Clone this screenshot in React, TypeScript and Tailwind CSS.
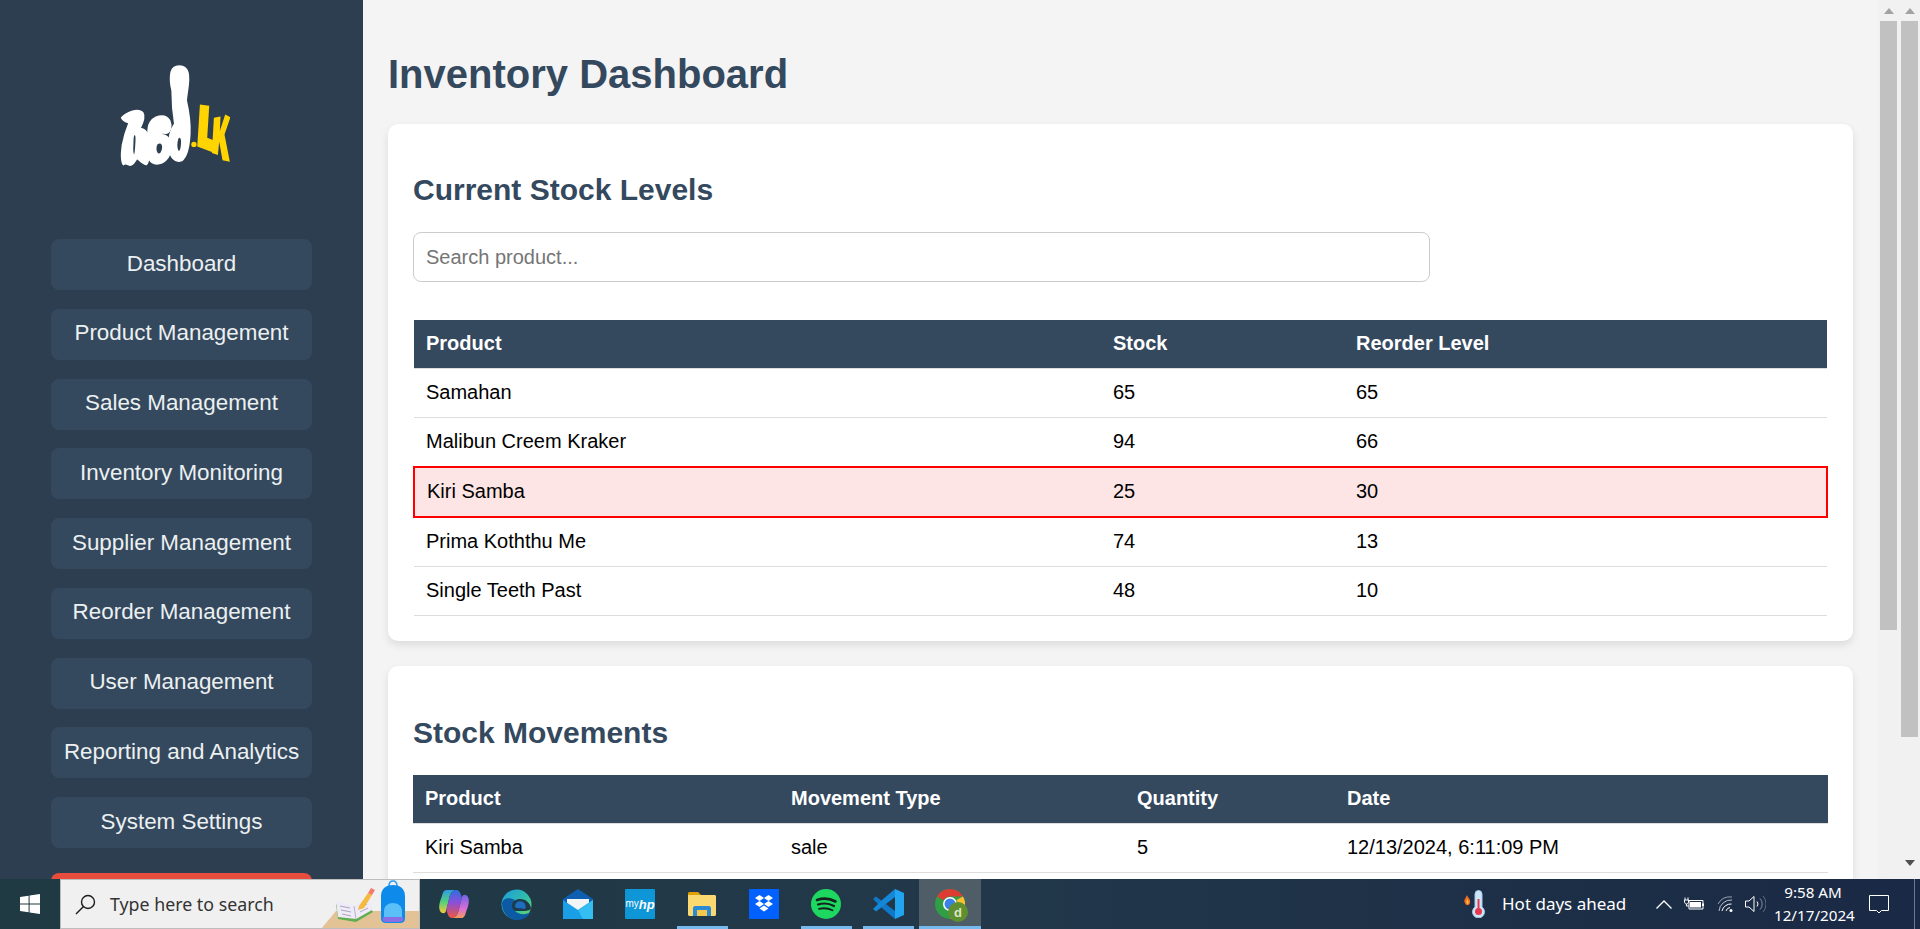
import type { ReactNode } from "react";

const NAV_ITEMS = [
  "Dashboard",
  "Product Management",
  "Sales Management",
  "Inventory Monitoring",
  "Supplier Management",
  "Reorder Management",
  "User Management",
  "Reporting and Analytics",
  "System Settings",
];

const STOCK_ROWS = [
  { name: "Samahan", stock: 65, reorder: 65 },
  { name: "Malibun Creem Kraker", stock: 94, reorder: 66 },
  { name: "Kiri Samba", stock: 25, reorder: 30 },
  { name: "Prima Koththu Me", stock: 74, reorder: 13 },
  { name: "Single Teeth Past", stock: 48, reorder: 10 },
];

const TH = "px-3 pt-[13px] pb-[15px] text-left text-[20px] leading-[20px] font-bold text-white border-b border-[#ddd]";
const TD = "px-3 pt-[13px] pb-[15px] text-left text-[20px] leading-[20px] text-black border-b border-[#ddd]";

function Logo() {
  return (
    <svg width="110" height="103" viewBox="360 190 330 310">
      <g fill="#fff" stroke="#fff" strokeWidth="6" strokeLinejoin="round">
        <path d="M365 352C380 335 415 322 428 338C436 352 424 372 418 385C435 385 447 400 447 430C447 460 447 485 438 492C427 490 420 480 410 472C405 482 400 492 390 494C380 494 378 484 370 492C362 480 364 440 372 415C376 395 383 380 388 366C378 364 370 362 365 352Z" />
        <path d="M447 375C458 345 495 338 508 360C516 378 510 398 496 398C484 396 476 398 474 406C494 398 514 412 512 442C510 472 492 490 470 490C450 490 440 470 444 440C447 420 441 398 447 375Z" />
        <path d="M514 215C520 192 555 190 563 215C570 240 560 270 558 300C565 330 571 360 569 400C567 440 559 470 545 480C525 488 510 470 508 440C506 410 514 385 525 370C520 340 517 300 517 270C512 250 510 235 514 215Z" />
      </g>
      <g fill="#2c3e50">
        <path d="M402 405C405 403 407 407 406 422C405 445 404 458 402 462C399 458 399 445 400 427C400 415 401 408 402 405Z" />
        <path d="M472 432C480 426 488 430 486 444C484 456 478 462 473 458C468 450 468 440 472 432Z" />
        <path d="M535 415C540 408 544 414 543 430C542 446 539 454 535 450C531 442 531 428 535 415Z" />
      </g>
      <circle cx="582" cy="432" r="8" fill="#ffd400" />
      <g fill="#ffd400">
        <path d="M600 312L628 316L622 412L652 424L650 460L592 438Z" />
        <path d="M642 352L662 348L660 392L676 342L692 350L674 402L690 484L668 480L658 424L654 464L636 458Z" />
      </g>
    </svg>
  );
}

function Sidebar() {
  return (
    <aside className="w-[363px] shrink-0 overflow-hidden bg-[#2c3e50] px-[51px]">
      <div className="h-[239px] pt-[64px] pl-[69px]">
        <Logo />
      </div>
      <nav className="flex flex-col gap-[18.75px]">
        {NAV_ITEMS.map((item) => (
          <a
            key={item}
            className="flex h-[51px] items-center justify-center rounded-lg bg-[#34495e] pb-[2px] text-[22.4px] text-[#ecf0f1]"
          >
            {item}
          </a>
        ))}
        <div className="mt-[6px] h-[51px] rounded-lg bg-[#e74c3c]" />
      </nav>
    </aside>
  );
}

function Card({ className, children }: { className: string; children: ReactNode }) {
  return (
    <section className={`rounded-[10px] bg-white px-[25px] pb-[25px] shadow-[0_4px_8px_rgba(0,0,0,0.1)] ${className}`}>
      {children}
    </section>
  );
}

function MainContent() {
  return (
    <main className="flex-1 overflow-hidden bg-[#f4f4f4] pl-[25px] pr-[25px] pt-[50px]">
      <h1 className="mb-[26px] text-[40px] leading-[48px] font-bold text-[#34495e]">Inventory Dashboard</h1>

      <Card className="pt-[49px]">
        <h2 className="mb-[25px] text-[30px] leading-[34px] font-bold text-[#34495e]">Current Stock Levels</h2>
        <input
          placeholder="Search product..."
          className="mb-[38px] block h-[50px] w-[1017px] rounded-lg border border-[#ccc] px-[12px] text-[20px] placeholder:text-[#757575]"
        />
        <table className="w-full table-fixed border-collapse">
          <colgroup>
            <col className="w-[687px]" />
            <col className="w-[243px]" />
            <col />
          </colgroup>
          <thead>
            <tr className="bg-[#34495e]">
              <th className={TH}>Product</th>
              <th className={TH}>Stock</th>
              <th className={TH}>Reorder Level</th>
            </tr>
          </thead>
          <tbody>
            {STOCK_ROWS.map((row) => (
              <tr key={row.name} className={row.stock < row.reorder ? "border-2 border-[#ff0000] bg-[#fde5e5]" : ""}>
                <td className={TD}>{row.name}</td>
                <td className={TD}>{row.stock}</td>
                <td className={TD}>{row.reorder}</td>
              </tr>
            ))}
          </tbody>
        </table>
      </Card>

      <Card className="mt-[25px] pt-[50px]">
        <h2 className="mb-[25px] text-[30px] leading-[34px] font-bold text-[#34495e]">Stock Movements</h2>
        <table className="w-full table-fixed border-collapse">
          <colgroup>
            <col className="w-[366px]" />
            <col className="w-[346px]" />
            <col className="w-[210px]" />
            <col />
          </colgroup>
          <thead>
            <tr className="bg-[#34495e]">
              <th className={TH}>Product</th>
              <th className={TH}>Movement Type</th>
              <th className={TH}>Quantity</th>
              <th className={TH}>Date</th>
            </tr>
          </thead>
          <tbody>
            <tr>
              <td className={TD}>Kiri Samba</td>
              <td className={TD}>sale</td>
              <td className={TD}>5</td>
              <td className={TD}>12/13/2024, 6:11:09 PM</td>
            </tr>
          </tbody>
        </table>
      </Card>
    </main>
  );
}

function ScrollBar({ thumb, withDown }: { thumb: string; withDown?: boolean }) {
  return (
    <div className="flex w-[21px] shrink-0 flex-col bg-[#f1f1f1] px-[2px]">
      <div className="flex h-[21px] items-center justify-center">
        <svg width="10" height="6" viewBox="0 0 10 6">
          <path d="M5 0L10 6H0Z" fill="#a3a3a3" />
        </svg>
      </div>
      <div className={`${thumb} shrink-0 bg-[#c1c1c1]`} />
      {withDown && (
        <div className="mt-auto flex h-[21px] items-start justify-center pt-[2px]">
          <svg width="10" height="6" viewBox="0 0 10 6">
            <path d="M0 0H10L5 6Z" fill="#505050" />
          </svg>
        </div>
      )}
    </div>
  );
}

function WindowsLogo() {
  return (
    <svg width="20" height="20" viewBox="0 0 20 20" fill="#fff">
      <path d="M0 3L8.6 1.7V9.5H0Z" />
      <path d="M9.6 1.5L20 0V9.5H9.6Z" />
      <path d="M0 10.5H8.6V18.3L0 17Z" />
      <path d="M9.6 10.5H20V20L9.6 18.5Z" />
    </svg>
  );
}

function SearchDecor() {
  return (
    <svg width="98" height="48" viewBox="0 1 98 48" className="shrink-0">
      <path d="M15 32H98V50H0Z" fill="#e3c396" />
      <path d="M15 25L17 40L35 43L52 33L50 30L35 40Z" fill="#5fae4f" />
      <path d="M15 22L33 27L49 18L51 31L35 40L17 38Z" fill="#efeaf8" />
      <path d="M33 27L35 40" stroke="#b9b3cc" strokeWidth="1" />
      <path d="M19 27L29 29M20 31L30 33M21 35L30 37M38 29L46 25M39 33L47 29" stroke="#aaa7bd" strokeWidth="1" />
      <path d="M38 27L47 14L51 16L43 29L37 31Z" fill="#f4b93d" />
      <path d="M47 14L50 9L54 11L51 16Z" fill="#ef7c6d" />
      <path d="M68 7C68 3 70 2 72 2C74 2 76 3 76 7" fill="none" stroke="#2a9cf0" strokeWidth="1.500" />
      <path d="M60 17C60 9 66 6 72 6C78 6 84 9 84 17V39C84 43 82 44 78 44H66C62 44 60 43 60 39Z" fill="#0e8bea" />
      <path d="M63 32C63 27 67 24 72 24C77 24 81 27 81 32V38H63Z" fill="#5cc0f8" />
      <path d="M62 38H82V41C82 42 80 43 78 43H66C64 43 62 42 62 41Z" fill="#8a6ee6" />
    </svg>
  );
}

function Copilot() {
  return (
    <svg width="30" height="30" viewBox="0 0 30 30">
      <defs>
        <linearGradient id="cpA" x1="0.3" y1="0" x2="0.3" y2="1">
          <stop offset="0" stopColor="#2f9be8" />
          <stop offset="0.5" stopColor="#4fd07a" />
          <stop offset="1" stopColor="#f8c93a" />
        </linearGradient>
        <linearGradient id="cpB" x1="0.5" y1="0" x2="0.5" y2="1">
          <stop offset="0" stopColor="#6f63ea" />
          <stop offset="0.6" stopColor="#d96ed6" />
          <stop offset="1" stopColor="#f59a5a" />
        </linearGradient>
        <linearGradient id="cpC" x1="0.5" y1="0" x2="0.5" y2="1">
          <stop offset="0" stopColor="#2f6fe4" />
          <stop offset="0.45" stopColor="#8a4fd8" />
          <stop offset="1" stopColor="#f1573f" />
        </linearGradient>
      </defs>
      <path d="M8 1H17C12 2 11 6 10 10L7 22C6 25 3 25 1 22C-1 18 1 12 3 7C4 3 5 1 8 1Z" fill="url(#cpA)" />
      <path d="M22 29H13C18 28 19 24 20 20L23 8C24 5 27 5 29 8C31 12 29 18 27 23C26 27 25 29 22 29Z" fill="url(#cpB)" />
      <path d="M10 10C11 6 13 2 17 1C20 1 21 3 22 6L23 9L20 20C19 24 18 28 13 29C10 29 9 26 8 23L7.500 20Z" fill="url(#cpC)" />
    </svg>
  );
}

function Edge() {
  return (
    <svg width="31" height="31" viewBox="0 0 31 31">
      <defs>
        <linearGradient id="edA" x1="0" y1="0" x2="1" y2="1">
          <stop offset="0" stopColor="#1b9de2" />
          <stop offset="0.6" stopColor="#35c1a0" />
          <stop offset="1" stopColor="#7edb55" />
        </linearGradient>
      </defs>
      <circle cx="15.500" cy="15.500" r="15" fill="url(#edA)" />
      <path d="M1 14C1 25 9 31 16 31C22 31 27 28 30 23C25 26 18 26 14 22C11 19 11 14 14 11C8 8 2 9 1 14Z" fill="#0c59a4" />
      <path d="M11 17C11 12 15 10 19 10C25 10 29 14 30 19C30 21 27 22 22 22H15C13 22 11 20 11 17Z" fill="#1f3a4a" />
      <path d="M14 18C14 13 18 11 22 13C25 15 25 19 24 20C20 19 16 20 14 18Z" fill="#1c6fc0" />
    </svg>
  );
}

function Mail() {
  return (
    <svg width="30" height="30" viewBox="0 0 30 30">
      <path d="M0 10L15 0L30 10V30H0Z" fill="#0f5fb0" />
      <path d="M4 10H26V20L15 25L4 20Z" fill="#f2f4f6" />
      <path d="M0 11L15 21L30 11V30H0Z" fill="#1a9fe6" />
      <path d="M15 21L30 11V30H20Z" fill="#34bdf0" />
    </svg>
  );
}

function MyHp() {
  return (
    <div className="flex h-[30px] w-[30px] items-center justify-center rounded-[1px] bg-[#0f96d6] text-white">
      <span className="text-[10px] leading-none">my</span>
      <span className="text-[13px] leading-none font-bold italic">hp</span>
    </div>
  );
}

function Explorer() {
  return (
    <svg width="28" height="24" viewBox="0 0 28 24">
      <path d="M0 1.500C0 .6 .6 0 1.500 0H10L13 3H0Z" fill="#e0a100" />
      <path d="M0 3H26.500C27.400 3 28 3.600 28 4.500V22.500C28 23.400 27.400 24 26.500 24H1.500C.6 24 0 23.400 0 22.500Z" fill="#fbd971" />
      <path d="M5 24V16C5 15 6 14 7 14H21C22 14 23 15 23 16V24H19V18H9V24Z" fill="#2a8ad4" />
      <path d="M9 18H19V24H9Z" fill="#f5c84b" />
    </svg>
  );
}

function Dropbox() {
  return (
    <svg width="30" height="30" viewBox="0 0 30 30">
      <rect width="30" height="30" fill="#0061fe" />
      <g fill="#fff">
        <path d="M10.500 6L15 9L10.500 12L6 9Z" />
        <path d="M19.500 6L24 9L19.500 12L15 9Z" />
        <path d="M10.500 12L15 15L10.500 18L6 15Z" />
        <path d="M19.500 12L24 15L19.500 18L15 15Z" />
        <path d="M15 16.500L19.500 19.500L15 22.500L10.500 19.500Z" />
      </g>
    </svg>
  );
}

function Spotify() {
  return (
    <svg width="30" height="30" viewBox="0 0 30 30">
      <circle cx="15" cy="15" r="15" fill="#1ed760" />
      <g fill="none" stroke="#14241c" strokeLinecap="round">
        <path d="M6 11C12 9 19 9.500 24.500 12.500" strokeWidth="2.600" />
        <path d="M7 15.500C12 14 18.500 14.500 23 17" strokeWidth="2.200" />
        <path d="M8 19.800C12.500 18.800 17.500 19.200 21.500 21.300" strokeWidth="1.800" />
      </g>
    </svg>
  );
}

function VsCode() {
  return (
    <svg width="31" height="30" viewBox="0 0 31 30">
      <path d="M0 10L3 7.500L22 22V30L9 19Z" fill="#0f78c8" />
      <path d="M0 20L3 22.500L22 8V0L9 11Z" fill="#1587d8" />
      <path d="M22 0L31 4V26L22 30Z" fill="#22a5f1" />
    </svg>
  );
}

function Chrome() {
  return (
    <div className="relative h-[30px] w-[30px]">
      <svg width="30" height="30" viewBox="0 0 30 30">
        <circle cx="15" cy="15" r="15" fill="#2f9e44" />
        <path d="M15 0A15 15 0 0 1 28 7.500H15A7.500 7.500 0 0 0 8.500 11.300L2 7.500A15 15 0 0 1 15 0Z" fill="#dc3c31" />
        <path d="M28 7.500A15 15 0 0 1 15 30L21.500 19A7.500 7.500 0 0 0 21.500 11Z" fill="#fbc02d" />
        <circle cx="15" cy="15" r="7" fill="#fff" />
        <circle cx="15" cy="15" r="5.500" fill="#3b82e6" />
      </svg>
      <span className="absolute left-[13px] top-[13px] flex h-[20px] w-[20px] items-center justify-center rounded-full bg-[#5f8f2f] text-[13px] leading-none font-bold text-[#dbe6c4]">
        d
      </span>
    </div>
  );
}

const TASK_APPS: { key: string; icon: ReactNode; running?: boolean; active?: boolean }[] = [
  { key: "copilot", icon: <Copilot /> },
  { key: "edge", icon: <Edge /> },
  { key: "mail", icon: <Mail /> },
  { key: "myhp", icon: <MyHp /> },
  { key: "explorer", icon: <Explorer />, running: true },
  { key: "dropbox", icon: <Dropbox /> },
  { key: "spotify", icon: <Spotify />, running: true },
  { key: "vscode", icon: <VsCode />, running: true },
  { key: "chrome", icon: <Chrome />, active: true },
];

function Thermometer() {
  return (
    <svg width="24" height="28" viewBox="0 0 24 28">
      <path d="M2 13C0 10 3 8 4 5C5 8 8 9 7 13C6 16 3 16 2 13Z" fill="#f26b21" />
      <path d="M3.500 13C3 11 4 10 4.500 9C5 11 6 11 5.500 13C5 14.500 4 14.500 3.500 13Z" fill="#fbbf3f" />
      <path d="M12 4A3.500 3.500 0 0 1 19 4V17A6 6 0 1 1 12 17Z" fill="#cfe6f7" stroke="#9fcbed" strokeWidth="1" />
      <rect x="14.500" y="9" width="2" height="10" fill="#e63950" />
      <circle cx="15.500" cy="21.500" r="3.500" fill="#e63950" />
    </svg>
  );
}

function Tray() {
  return (
    <div className="ml-auto flex h-full items-center text-white">
      <Thermometer />
      <span className="ml-[15px] w-[122px] font-['Noto_Sans',sans-serif] text-[17px] whitespace-nowrap">Hot days ahead</span>
      <svg width="16" height="9" viewBox="0 0 16 9" className="ml-[32px]" fill="none" stroke="#fff" strokeWidth="1.300">
        <path d="M.5 8.500L8 1L15.500 8.500" />
      </svg>
      <svg width="20" height="14" viewBox="0 0 20 14" className="ml-[12px]" fill="none" stroke="#fff">
        <path d="M5 3.500H19V12H5Z" strokeWidth="1" />
        <path d="M6 5H17V10.500H6Z" fill="#fff" stroke="none" />
        <path d="M18 6.500H20V9H18Z" fill="#fff" stroke="none" />
        <path d="M1 .5V3M4 .5V3M.5 3H4.500V5C4.500 6 3.500 7 2.500 7C1.500 7 .5 6 .5 5ZM2.500 7V9H5" strokeWidth="1" />
      </svg>
      <svg width="16" height="16" viewBox="0 0 16 16" className="ml-[13px]" fill="none" stroke="#fff">
        <path d="M1 8A14 14 0 0 1 15 1" strokeWidth="1" opacity="0.55" />
        <path d="M2 15A12 12 0 0 1 15 4" strokeWidth="1" opacity="0.7" />
        <path d="M5 15A9 9 0 0 1 14.500 8" strokeWidth="1" />
        <path d="M9 15A5 5 0 0 1 13 11.500" strokeWidth="1" />
        <circle cx="14" cy="14.500" r="1.500" fill="#fff" stroke="none" />
      </svg>
      <svg width="21" height="18" viewBox="0 0 21 18" className="ml-[12px]" fill="none" stroke="#fff" strokeWidth="1">
        <path d="M.5 6H4L9 1.500V16.500L4 12H.5Z" />
        <path d="M12 6.500A4 4 0 0 1 12 11.500" />
        <path d="M15 3.500A8 8 0 0 1 15 14.500" opacity="0.45" />
        <path d="M18 1A12 12 0 0 1 18 17" opacity="0.3" />
      </svg>
      <div className="ml-[8px] w-[78px] text-center font-['Noto_Sans',sans-serif] text-[15.200px] leading-[23px]">
        <div>9:58 AM</div>
        <div className="whitespace-nowrap">12/17/2024</div>
      </div>
      <svg width="20" height="19" viewBox="0 0 20 19" className="ml-[17px]" fill="none" stroke="#fff" strokeWidth="1">
        <path d="M.5 .5H19.500V15.500H12.500L10 18L7.500 15.500H.5Z" />
      </svg>
      <div className="ml-[25px] h-full w-[1px] bg-[#6d7a8c]" />
      <div className="w-[5px]" />
    </div>
  );
}

function Taskbar() {
  return (
    <footer className="flex h-[50px] shrink-0 items-center bg-gradient-to-r from-[#1f3a42] via-[#22384a] to-[#1a2945]">
      <div className="flex h-full w-[60px] items-center justify-center">
        <WindowsLogo />
      </div>
      <div className="flex h-full w-[360px] items-center border border-[#bdbdbd] bg-[#f0f0f0] pl-[14px]">
        <svg width="21" height="21" viewBox="0 0 21 21" fill="none" stroke="#1c1c1c" strokeWidth="1.400" className="shrink-0">
          <circle cx="13" cy="8" r="6.500" />
          <path d="M8.500 12.500L1 20" />
        </svg>
        <span className="ml-[14px] font-['Noto_Sans',sans-serif] text-[17.800px] whitespace-nowrap text-[#333]">Type here to search</span>
        <div className="ml-auto">
          <SearchDecor />
        </div>
      </div>
      <div className="ml-[3px] flex h-full">
        {TASK_APPS.map((app) => (
          <div key={app.key} className={`relative flex h-full w-[62px] items-center justify-center ${app.active ? "bg-[#4e5d66]" : ""}`}>
            {app.icon}
            {app.running && <span className="absolute bottom-0 left-[6px] right-[5px] h-[3px] bg-[#76b9ed]" />}
            {app.active && <span className="absolute bottom-0 left-0 right-0 h-[3px] bg-[#76b9ed]" />}
          </div>
        ))}
      </div>
      <Tray />
    </footer>
  );
}

export default function App() {
  return (
    <div className="flex h-[929px] flex-col overflow-hidden font-['Liberation_Sans',Arial,sans-serif]">
      <div className="flex h-[879px] overflow-hidden">
        <Sidebar />
        <MainContent />
        <ScrollBar thumb="h-[609px]" />
        <ScrollBar thumb="h-[716px]" withDown />
      </div>
      <Taskbar />
    </div>
  );
}
